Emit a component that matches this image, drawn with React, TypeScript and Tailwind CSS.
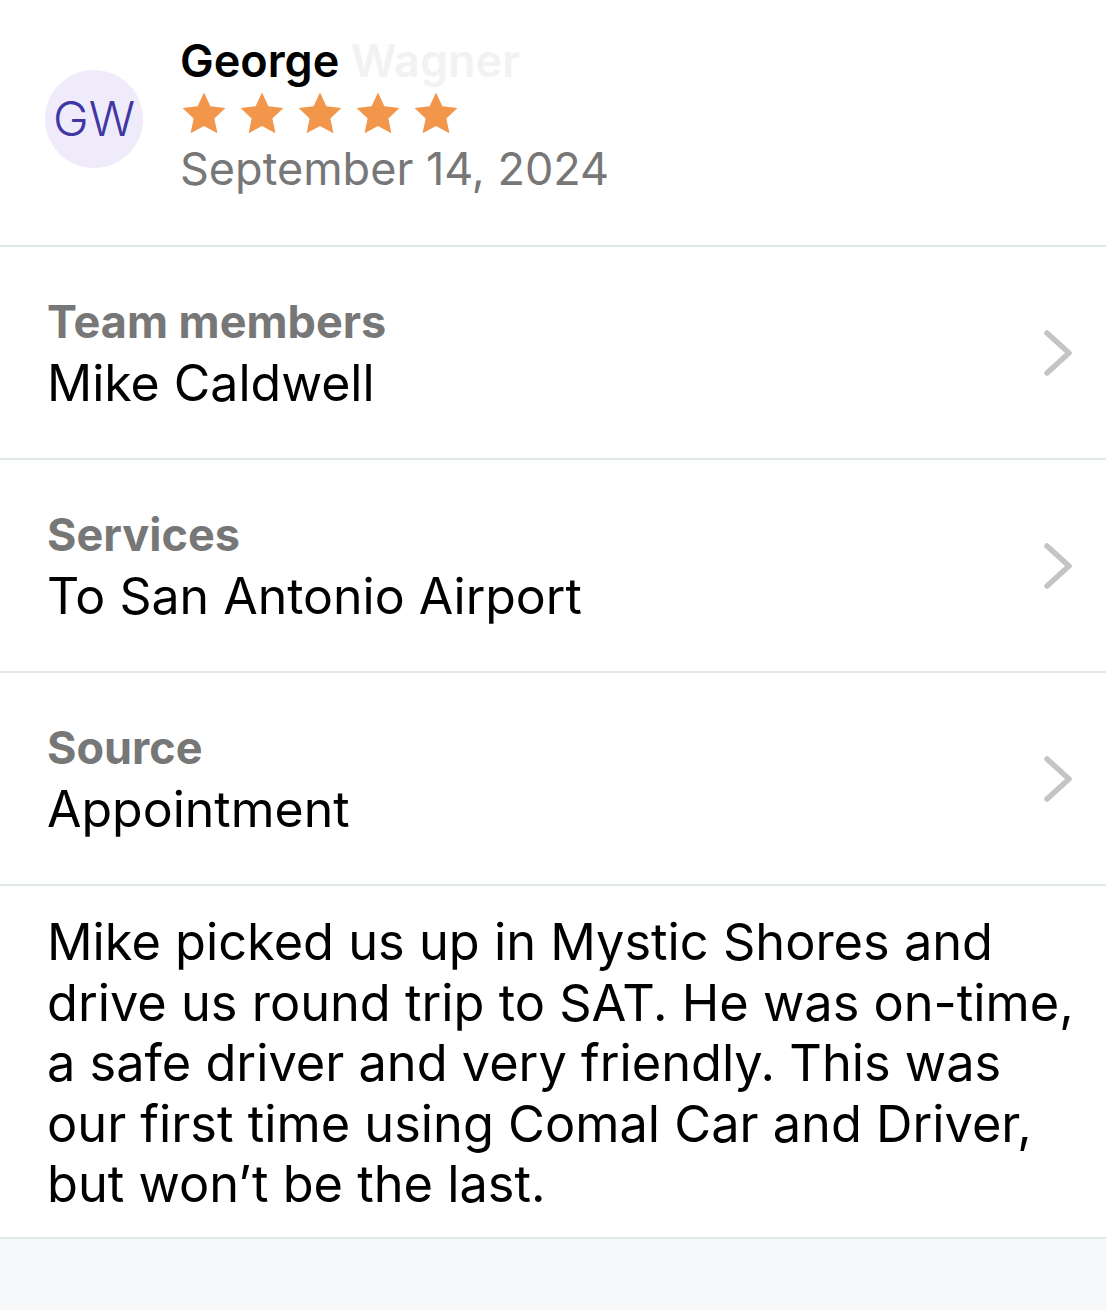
import React from 'react'

const ROWS = [
  { label: 'Team members', value: 'Mike Caldwell' },
  { label: 'Services', value: 'To San Antonio Airport' },
  { label: 'Source', value: 'Appointment' },
]

function Star() {
  return (
    <svg viewBox="0 0 24 24" className="h-[48px] w-[48px]" fill="#f1964b">
      <path d="M12 1.2l3.2 6.9 7.5.9-5.5 5.2 1.5 7.4L12 18l-6.7 3.6 1.5-7.4L1.3 9l7.5-.9z" />
    </svg>
  )
}

function Chevron() {
  return (
    <svg viewBox="0 0 30 48" className="h-[48px] w-[30px]" fill="none" stroke="#c4c4c6" strokeWidth="5.5" strokeLinecap="round" strokeLinejoin="round">
      <path d="M4 4l22 20L4 44" />
    </svg>
  )
}

export default function App() {
  return (
    <main className="min-h-[1310px] bg-[#f7f8f9]" style={{ fontFamily: 'Inter, "Liberation Sans", sans-serif' }}>
      <div className="bg-white">
        {/* Reviewer */}
        <div className="flex h-[247px] items-start gap-[37px] border-b-2 border-[#e1e8e8] pl-[45px] pt-[34px]">
          <div className="mt-[36px] flex h-[98px] w-[98px] items-center justify-center rounded-full bg-[#efebfb] text-[48px] font-light text-[#3f37a3]">
            GW
          </div>
          <div className="flex flex-col">
            <div className="text-[45px] leading-[54px] font-semibold text-black">
              George <span className="text-[#f2f2f2]">Wagner</span>
            </div>
            <div className="mt-[2px] flex gap-[10px] pl-[0px]">
              {[0, 1, 2, 3, 4].map((i) => (
                <Star key={i} />
              ))}
            </div>
            <div className="mt-[4px] text-[45px] leading-[54px] text-[#777777]">September 14, 2024</div>
          </div>
        </div>

        {ROWS.map((row) => (
          <div key={row.label} className="flex h-[213px] items-center justify-between border-b-2 border-[#e1e8e8] pl-[47px] pr-[33px]">
            <div className="flex flex-col">
              <div className="text-[45px] leading-[60px] font-bold text-[#777777]">{row.label}</div>
              <div className="text-[50px] leading-[62px] text-black">{row.value}</div>
            </div>
            <Chevron />
          </div>
        ))}

        {/* Review text */}
        <div className="border-b-2 border-[#e1e8e8] pl-[47px] pr-[20px] pt-[26px] pb-[22px] text-[50.5px] leading-[60.5px] text-black">
          Mike picked us up in Mystic Shores and drive us round trip to SAT. He was on-time, a safe driver and very friendly. This was our first time using Comal Car and Driver, but won’t be the last.
        </div>
      </div>
    </main>
  )
}
